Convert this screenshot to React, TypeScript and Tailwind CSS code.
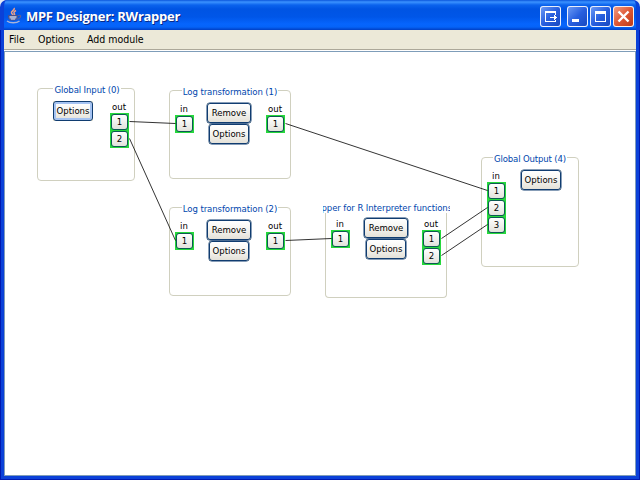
import React from "react";

type Button = { label: string; x: number; y: number; w: number; h: number; focused?: boolean };
type Port = { label: string; x: number; y: number };
type Caption = { label: string; x: number; y: number };
type Node = {
  title: string;
  x: number;
  y: number;
  w: number;
  h: number;
  titleX: number;
  titleW: number;
  tracking: string;
  clipped?: boolean;
  buttons: Button[];
  ports: Port[];
  captions: Caption[];
};

/* Button, port and caption positions are relative to their node. */
const nodes: Node[] = [
  {
    title: "Global Input (0)", x: 37, y: 88, w: 98, h: 93, titleX: 16, titleW: 68, tracking: "tracking-[-0.12px]",
    buttons: [{ label: "Options", x: 16, y: 13, w: 40, h: 20, focused: true }],
    ports: [{ label: "1", x: 73, y: 25 }, { label: "2", x: 73, y: 42 }],
    captions: [{ label: "out", x: 82, y: 18 }],
  },
  {
    title: "Log transformation (1)", x: 169, y: 90, w: 122, h: 89, titleX: 13, titleW: 96, tracking: "tracking-[-0.08px]",
    buttons: [{ label: "Remove", x: 38, y: 13, w: 44, h: 20 }, { label: "Options", x: 40, y: 34, w: 40, h: 20 }],
    ports: [{ label: "1", x: 6, y: 25 }, { label: "1", x: 97, y: 25 }],
    captions: [{ label: "in", x: 15, y: 18 }, { label: "out", x: 106, y: 18 }],
  },
  {
    title: "Log transformation (2)", x: 169, y: 207, w: 122, h: 89, titleX: 13, titleW: 96, tracking: "tracking-[-0.08px]",
    buttons: [{ label: "Remove", x: 38, y: 13, w: 44, h: 20 }, { label: "Options", x: 40, y: 34, w: 40, h: 20 }],
    ports: [{ label: "1", x: 6, y: 25 }, { label: "1", x: 97, y: 25 }],
    captions: [{ label: "in", x: 15, y: 18 }, { label: "out", x: 106, y: 18 }],
  },
  {
    title: "Wrapper for R Interpreter functions", x: 325, y: 205, w: 122, h: 93, titleX: -2, titleW: 127, tracking: "tracking-[-0.1px]", clipped: true,
    buttons: [{ label: "Remove", x: 39, y: 13, w: 44, h: 20 }, { label: "Options", x: 41, y: 34, w: 40, h: 20 }],
    ports: [{ label: "1", x: 6, y: 25 }, { label: "1", x: 97, y: 25 }, { label: "2", x: 97, y: 42 }],
    captions: [{ label: "in", x: 15, y: 18 }, { label: "out", x: 106, y: 18 }],
  },
  {
    title: "Global Output (4)", x: 481, y: 157, w: 98, h: 110, titleX: 12, titleW: 74, tracking: "tracking-[-0.16px]",
    buttons: [{ label: "Options", x: 40, y: 13, w: 40, h: 20 }],
    ports: [{ label: "1", x: 6, y: 25 }, { label: "2", x: 6, y: 42 }, { label: "3", x: 6, y: 59 }],
    captions: [{ label: "in", x: 15, y: 18 }],
  },
];

const wires = [
  [129, 121, 175, 123],
  [129, 138, 175, 240],
  [285, 123, 487, 190],
  [285, 240, 331, 238],
  [441, 238, 487, 207],
  [441, 255, 487, 224],
];

function ModuleNode({ node }: { node: Node }) {
  return (
    <section className="absolute" style={{ left: node.x, top: node.y, width: node.w, height: node.h }}>
      <div className={`absolute inset-x-0 bottom-0 rounded-[4px] border border-[#d0d0bf] ${node.clipped ? "top-[4px] border-t-transparent" : "top-0"}`} />
      <div
        className="absolute top-[-5px] flex h-[13px] justify-center overflow-hidden bg-white leading-[13px] text-[#0046ad]"
        style={{ left: node.titleX, width: node.titleW }}
      >
        <span className={`shrink-0 whitespace-nowrap ${node.tracking} ${node.clipped ? "relative left-[-8px] top-px" : ""}`}>{node.title}</span>
      </div>
      {node.captions.map((c) => (
        <span key={c.label} className="absolute w-6 -translate-x-1/2 text-center leading-[13px]" style={{ left: c.x, top: c.y - 6 }}>
          {c.label}
        </span>
      ))}
      {node.buttons.map((b) => (
        <div key={b.label} className="absolute bg-[#ece9d8]" style={{ left: b.x, top: b.y, width: b.w, height: b.h }}>
          <button
            className={`flex h-full w-full items-center justify-center rounded-[3px] border border-[#103c70] bg-linear-to-b from-white via-[#f5f4f0] to-[#e4e1d8] leading-none whitespace-nowrap ${b.focused ? "shadow-[inset_0_0_0_2px_#a5c3f2]" : "shadow-[0_0_0_0.5px_#103c70]"}`}
          >
            {b.label}
          </button>
        </div>
      ))}
      {node.ports.map((p, i) => (
        <div key={i} className="absolute h-[18px] w-[19px] bg-[#26d83c] p-px" style={{ left: p.x, top: p.y }}>
          <button className="flex h-full w-full items-center justify-center rounded-[3px] border border-[#0b5a51] bg-linear-to-b from-white to-[#e3e2dc] pb-px leading-none">
            {p.label}
          </button>
        </div>
      ))}
    </section>
  );
}

function JavaCup() {
  return (
    <svg className="h-[17px] w-[16px]" viewBox="0 0 16 17" fill="none">
      <path d="M8 1c1.500 2-3.500 3-2.500 5 .4 1 1.500 1.500 1.500 2.500M10 3.500C7.500 5 7.500 5.500 8.500 7c.5 1-.5 1.500-.5 1.500" stroke="#f0a184" strokeWidth="1.500" />
      <path d="M2.500 8.500h9c0 3-1.500 4.500-2.500 4.500H5c-1.500 0-2.500-1.500-2.500-4.500Z" fill="#7e8bb8" stroke="#4a4f86" />
      <path d="M4 10h6M5 12h4" stroke="#d2d6ea" />
      <path d="M12 8.500c3.500-1 3.500 1.500.5 3.500h-1.500" stroke="#59619a" strokeWidth="1.200" />
      <path d="M1 14c3 2.300 9.500 2.300 12.500 0" stroke="#a9b3d8" strokeWidth="1.500" />
    </svg>
  );
}

function Caption({ kind }: { kind: "export" | "min" | "max" | "close" }) {
  return (
    <button
      className={`flex size-[21px] rounded-[3px] border border-white/90 ${kind === "close" ? "bg-linear-to-br from-[#ef9a80] via-[#de5734] to-[#bd3a17]" : "bg-linear-to-br from-[#6b98f4] via-[#285fdf] to-[#1848c0]"}`}
    >
      <svg className="size-[19px]" viewBox="0 0 19 19" fill="none" stroke="white" shapeRendering={kind === "close" ? "auto" : "crispEdges"}>
        {kind === "export" && (
          <>
            <path d="M4 5h11" strokeWidth="2" />
            <path d="M4.500 5v9.500h10V13M14.500 5v3M9 10.500h7" />
            <path d="M13 8v5l3-2.500Z" fill="white" stroke="none" />
          </>
        )}
        {kind === "min" && <path d="M4 13.500h7" strokeWidth="3" />}
        {kind === "max" && (
          <>
            <path d="M4 5.500h11" strokeWidth="3" />
            <path d="M4.500 5v9.500h10V5" />
          </>
        )}
        {kind === "close" && <path d="m4.500 4.500 10 10m0-10-10 10" strokeWidth="2.400" />}
      </svg>
    </button>
  );
}

export default function App() {
  return (
    <div className="h-[480px] w-[640px] overflow-hidden bg-[#e4eaf5] font-['DejaVu_Sans_Condensed','DejaVu_Sans',sans-serif] text-[9.5px] text-black">
      <div className="relative flex h-full flex-col overflow-hidden rounded-t-[7px] border-x-4 border-b-4 border-[#0b41d8] bg-[#0b41d8]">
        <header className="-mx-1 flex h-[30px] shrink-0 items-center bg-[linear-gradient(to_bottom,#0b56dc_0,#3b92ff_2px,#0b63ed_5px,#0054e3_9px,#0056e8_17px,#0665fd_24px,#0563f8_27px,#003fc4_30px)] pr-[6px] pl-[6px]">
          <JavaCup />
          <h1 className="ml-[4px] pt-[3px] font-['Open_Sans','Noto_Sans',sans-serif] text-[13px] leading-none font-bold tracking-[-0.28px] text-white [text-shadow:1px_1px_0_#0a2a86]">
            MPF Designer: RWrapper
          </h1>
          <div className="ml-auto flex gap-[2px] pt-[3px]">
            <div className="mr-[4px] flex">
              <Caption kind="export" />
            </div>
            <Caption kind="min" />
            <Caption kind="max" />
            <Caption kind="close" />
          </div>
        </header>
        <nav className="flex h-[19px] shrink-0 items-center bg-[#ece9d8] pl-[5px] text-[10.5px] leading-none">
          <span className="w-[29px]">File</span>
          <span className="w-[49px]">Options</span>
          <span>Add module</span>
        </nav>
        <div className="h-[2px] shrink-0 border-t border-[#aca899] bg-white" />
        <main className="flex-1 border border-[#7f9db9] bg-white" />
        <div className="absolute top-0 -left-1 h-[476px] w-[640px]">
          {nodes.map((n) => (
            <ModuleNode key={n.title} node={n} />
          ))}
          <svg className="pointer-events-none absolute inset-0 h-[476px] w-[640px]" stroke="black" strokeWidth="0.8">
            {wires.map(([x1, y1, x2, y2], i) => (
              <line key={i} x1={x1 + 0.5} y1={y1 + 0.5} x2={x2 + 0.5} y2={y2 + 0.5} />
            ))}
          </svg>
        </div>
      </div>
      <div className="pointer-events-none absolute bottom-0 left-0 h-[450px] w-[640px] border-x border-b border-[#0019b0]" />
    </div>
  );
}
